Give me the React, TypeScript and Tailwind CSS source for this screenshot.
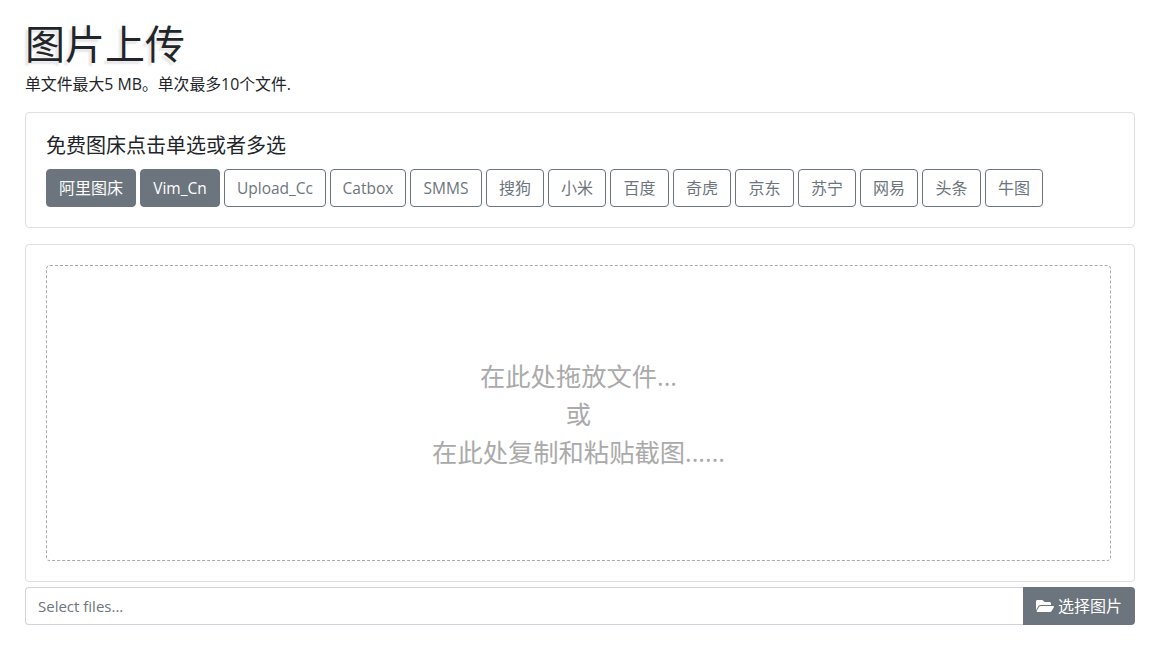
import { FaFolderOpen } from 'react-icons/fa';

const latin = 'text-[15.5px] pt-[2px]';
const cjk = 'text-[16px]';

const hosts = [
  { name: '阿里图床', active: true, width: 'w-[90px]', size: cjk },
  { name: 'Vim_Cn', active: true, width: 'w-[80px]', size: latin },
  { name: 'Upload_Cc', active: false, width: 'w-[102px]', size: latin },
  { name: 'Catbox', active: false, width: 'w-[76px]', size: latin },
  { name: 'SMMS', active: false, width: 'w-[72px]', size: latin },
  { name: '搜狗', active: false, width: 'w-[58px]', size: cjk },
  { name: '小米', active: false, width: 'w-[58px]', size: cjk },
  { name: '百度', active: false, width: 'w-[59px]', size: cjk },
  { name: '奇虎', active: false, width: 'w-[58px]', size: cjk },
  { name: '京东', active: false, width: 'w-[59px]', size: cjk },
  { name: '苏宁', active: false, width: 'w-[58px]', size: cjk },
  { name: '网易', active: false, width: 'w-[58px]', size: cjk },
  { name: '头条', active: false, width: 'w-[59px]', size: cjk },
  { name: '牛图', active: false, width: 'w-[58px]', size: cjk },
];

const App: React.FC = () => {
  return (
    <div className="min-h-screen bg-white text-[#212529] font-['Open_Sans','Noto_Sans_CJK_SC',sans-serif]">
      <div className="ml-[25px] w-[1110px] pt-[20px]">
        {/* Header */}
        <h1 className="text-[40px] leading-[48px] font-normal [text-shadow:-3px_3px_2px_#e6e6e6]">图片上传</h1>
        <p className="text-[15.85px] leading-[24px] mt-[4px]">单文件最大5 MB。单次最多10个文件.</p>

        {/* Image host picker */}
        <div className="mt-[16px] border border-[#dfdfdf] rounded-[4px] p-[20px]">
          <h5 className="text-[20px] leading-[24px] mt-[1px] mb-[11px] font-normal">免费图床点击单选或者多选</h5>
          <div className="flex gap-[4px]">
            {hosts.map((host) => (
              <button
                key={host.name}
                className={`${host.width} ${host.size} h-[38px] rounded-[4px] border border-[#6c757d] ${
                  host.active ? 'bg-[#6c757d] text-white' : 'bg-white text-[#6c757d]'
                }`}
              >
                {host.name}
              </button>
            ))}
          </div>
        </div>

        {/* Drop zone */}
        <div className="mt-[16px] border border-[#dfdfdf] rounded-[4px] pt-[20px] pb-[20px] pl-[20px] pr-[23px]">
          <div className="h-[296px] pt-[2px] border border-dashed border-[#aaa] rounded-[4px] flex flex-col items-center justify-center text-[25.3px] leading-[38px] text-[#aaa]">
            <div>在此处拖放文件...</div>
            <div>或</div>
            <div>在此处复制和粘贴截图......</div>
          </div>
        </div>

        {/* File input */}
        <div className="mt-[5px] flex h-[38px]">
          <div className="flex-1 border border-[#ced4da] border-r-0 rounded-l-[4px] px-[12px] flex items-center text-[15px] text-[#6c757d]">
            Select files...
          </div>
          <button className="w-[112px] bg-[#6c757d] text-white rounded-r-[4px] flex items-center justify-center gap-[4px] text-[16px]">
            <FaFolderOpen className="w-[18px] h-[16px]" />
            选择图片
          </button>
        </div>
      </div>
    </div>
  );
};

export default App;
